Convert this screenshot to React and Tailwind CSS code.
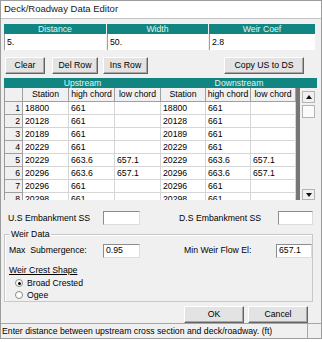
import React from "react";

const rows = [
  ["1", "18800", "661", "", "18800", "661", ""],
  ["2", "20128", "661", "", "20128", "661", ""],
  ["3", "20189", "661", "", "20189", "661", ""],
  ["4", "20229", "661", "", "20229", "661", ""],
  ["5", "20229", "663.6", "657.1", "20229", "663.6", "657.1"],
  ["6", "20296", "663.6", "657.1", "20296", "663.6", "657.1"],
  ["7", "20296", "661", "", "20296", "661", ""],
  ["8", "20298", "661", "", "20298", "661", ""],
];

function Btn({ className = "", children }) {
  return (
    <div
      className={
        "h-[17px] flex items-center justify-center bg-[#e3e3e3] border border-t-white border-l-white border-r-[#646464] border-b-[#646464] shadow-[inset_-1px_-1px_0_#a8a8a8] leading-none " +
        className
      }
    >
      {children}
    </div>
  );
}

function Field({ className = "", children }) {
  return (
    <div
      className={
        "h-[14px] bg-white border border-t-[#8c8c8c] border-l-[#8c8c8c] border-r-[#dcdcdc] border-b-[#dcdcdc] pl-[2px] flex items-center leading-none " +
        className
      }
    >
      {children}
    </div>
  );
}

function Radio({ checked, label }) {
  return (
    <div className="h-[12px] flex items-center pl-[10px] gap-[4px]">
      <div className="w-[8px] h-[8px] rounded-full bg-white border border-[#8a8a8a] flex items-center justify-center">
        {checked && <div className="w-[3px] h-[3px] rounded-full bg-black" />}
      </div>
      <span className="leading-none">{label}</span>
    </div>
  );
}

export default function App() {
  return (
    <div className="w-[322px] h-[342px] bg-white font-['Liberation_Sans',Arial,sans-serif] text-[8.7px] text-black">
      <div className="w-[322px] h-[339px] border border-[#9c9c9c] flex flex-col">
        <div className="h-[19px] flex items-center pl-[3px] text-[9.5px] text-[#1a1a1a] bg-white">
          Deck/Roadway Data Editor
        </div>
        <div className="flex-1 bg-[#f0f0f0] border-t border-[#c4c4c4] flex flex-col">
          <div className="px-[3px] flex flex-col">
            {/* Top fields */}
            <div className="mt-[5px] grid grid-cols-[102px_101px_106px] gap-x-px">
              {["Distance", "Width", "Weir Coef"].map((h) => (
                <div
                  key={h}
                  className="h-[10px] bg-[#108582] text-[#e4f3f1] text-center leading-[10px]"
                >
                  {h}
                </div>
              ))}
              {["5.", "50.", "2.8"].map((v, i) => (
                <div
                  key={i}
                  className="h-[16px] bg-white border-l border-[#a0a0a0] pl-[2px] flex items-center leading-none"
                >
                  {v}
                </div>
              ))}
            </div>

            {/* Buttons */}
            <div className="mt-[7px] flex">
              <Btn className="ml-[1px] w-[40px]">Clear</Btn>
              <Btn className="ml-[7px] w-[46px]">Del Row</Btn>
              <Btn className="ml-[5px] w-[45px]">Ins Row</Btn>
              <Btn className="ml-[76px] w-[80px]">Copy US to DS</Btn>
            </div>

            {/* Table */}
            <div className="mt-[4px] w-[313px] flex flex-col">
              <div className="h-[10px] flex bg-[#108582] text-[#e4f3f1] leading-[10px]">
                <div className="w-[157px] text-center">Upstream</div>
                <div className="flex-1 text-center">Downstream</div>
              </div>
              <div className="h-[112px] flex border-l border-[#9a9a9a]">
                <div className="grid grid-cols-[18px_46px_46px_46px_45px_45px_45px] grid-rows-[14px] auto-rows-[13px] w-[291px] h-[112px] overflow-hidden bg-white content-start">
                  <div className="bg-[#f0f0f0] border-r border-b border-[#a0a0a0]" />
                  {["Station", "high chord", "low chord", "Station", "high chord", "low chord"].map(
                    (h, i) => (
                      <div
                        key={i}
                        className="bg-[#f0f0f0] border-r border-b border-[#a0a0a0] text-center leading-[13px] whitespace-nowrap overflow-hidden"
                      >
                        {h}
                      </div>
                    )
                  )}
                  {rows.map((r) =>
                    r.map((c, j) =>
                      j === 0 ? (
                        <div
                          key={r[0] + "-" + j}
                          className="bg-[#f0f0f0] border-r border-b border-[#a0a0a0] text-right pr-[2px] leading-[12px]"
                        >
                          {c}
                        </div>
                      ) : (
                        <div
                          key={r[0] + "-" + j}
                          className="border-r border-b border-[#d6d6d6] pl-[2px] leading-[12px] whitespace-nowrap"
                        >
                          {c}
                        </div>
                      )
                    )
                  )}
                </div>
                <div className="w-[4px] bg-[#767676]" />
                <div className="w-[17px] bg-[#f0f0f0] flex flex-col pt-[3px] pb-[0px] px-[2px]">
                  <div className="h-[12px] bg-[#f0f0f0] border border-[#b4b4b4] flex items-center justify-center">
                    <svg width="6" height="4" viewBox="0 0 6 4">
                      <path d="M3 0 L6 4 L0 4 Z" fill="#111" />
                    </svg>
                  </div>
                  <div className="mt-[2px] h-[13px] bg-[#fbfbfb] border border-[#b4b4b4]" />
                  <div className="flex-1" />
                  <div className="h-[11px] bg-[#f0f0f0] border border-[#b4b4b4] flex items-center justify-center">
                    <svg width="6" height="4" viewBox="0 0 6 4">
                      <path d="M0 0 L6 0 L3 4 Z" fill="#111" />
                    </svg>
                  </div>
                </div>
              </div>
            </div>

            {/* Embankment */}
            <div className="mt-[11px] flex items-center h-[14px]">
              <div className="w-[99px] pl-[4px] leading-none">U.S Embankment SS</div>
              <Field className="w-[37px]" />
              <div className="w-[39px]" />
              <div className="w-[99px] leading-none">D.S Embankment SS</div>
              <Field className="w-[35px]" />
            </div>

            {/* Weir Data group */}
            <div className="mt-[9px] w-[309px] h-[68px] border border-[#c8c8c8] shadow-[inset_1px_1px_0_#ffffff] relative flex flex-col">
              <span className="absolute -top-[6px] left-[4px] px-[2px] bg-[#f0f0f0] leading-[10px]">
                Weir Data
              </span>
              <div className="mt-[9px] flex items-center h-[13px]">
                <div className="w-[98px] pl-[4px] leading-none">Max&nbsp; Submergence:</div>
                <Field className="w-[37px] h-[13px]">0.95</Field>
                <div className="w-[44px]" />
                <div className="w-[92px] leading-none">Min Weir Flow El:</div>
                <Field className="w-[36px] h-[13px]">657.1</Field>
              </div>
              <div className="mt-[8px] pl-[4px] h-[10px] leading-[10px] underline">
                Weir Crest Shape
              </div>
              <div className="mt-[2px]">
                <Radio checked label="Broad Crested" />
                <Radio label="Ogee" />
              </div>
            </div>

            {/* OK / Cancel */}
            <div className="mt-[4px] flex">
              <Btn className="ml-[180px] w-[60px] h-[15px]">OK</Btn>
              <Btn className="ml-[4px] w-[60px] h-[15px]">Cancel</Btn>
            </div>
          </div>

          {/* Status bar */}
          <div className="h-[15px] border-t border-[#a6a6a6] flex">
            <div className="w-[307px] border-r border-[#a6a6a6] pl-[1px] flex items-center leading-none whitespace-nowrap overflow-hidden">
              Enter distance between upstream cross section and deck/roadway. (ft)
            </div>
            <div className="flex-1" />
          </div>
        </div>
      </div>
    </div>
  );
}
